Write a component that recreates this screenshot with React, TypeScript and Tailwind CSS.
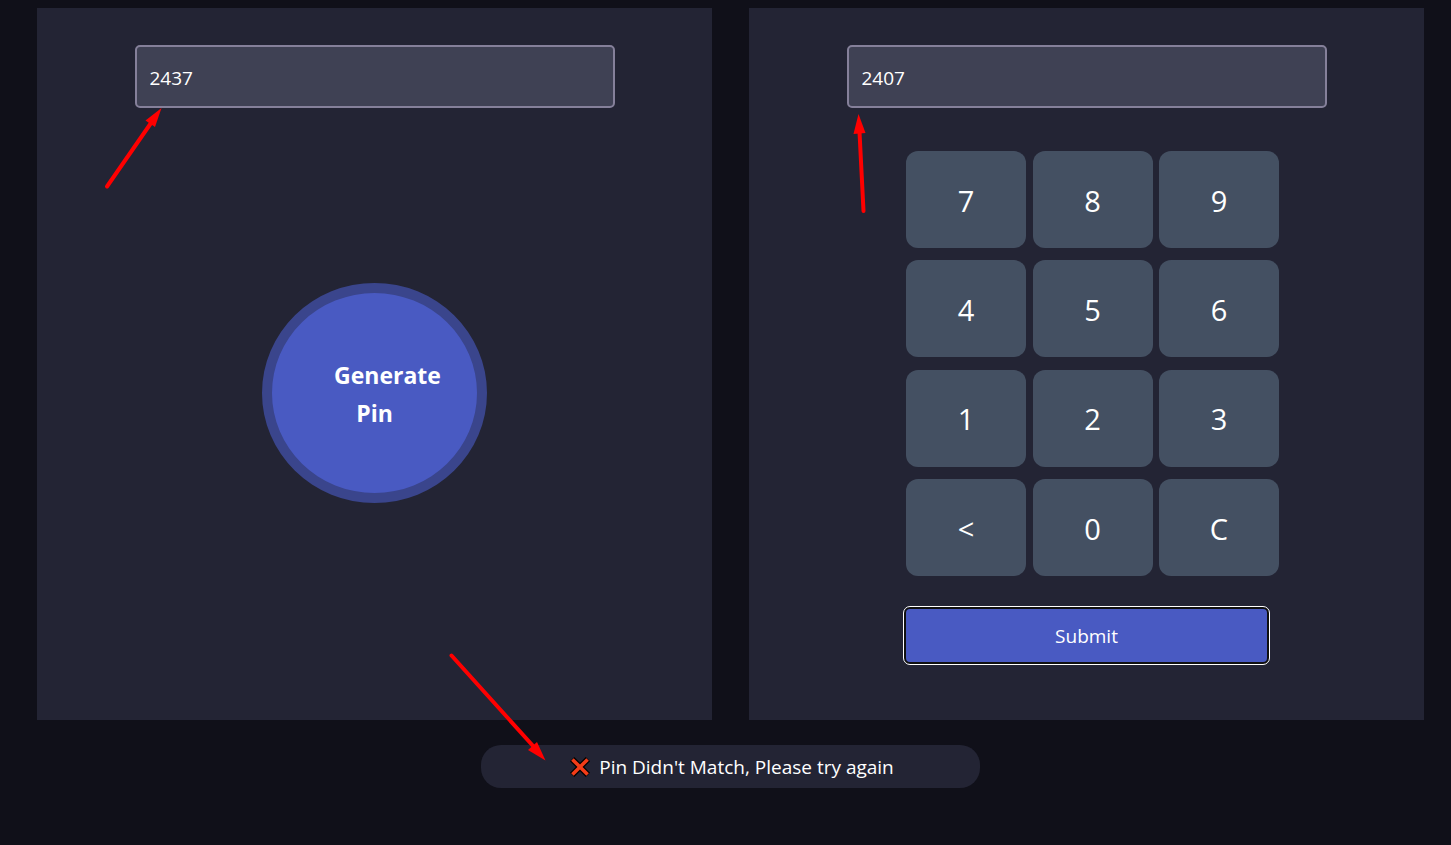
import { useState } from "react";

const KEYS = ["7", "8", "9", "4", "5", "6", "1", "2", "3", "<", "0", "C"];

const FIELD =
  "h-[63px] w-full max-w-[480px] rounded-[5px] border-2 border-[#85809a] bg-[#3f4154] px-[13px] pt-[2px] text-[19px] text-white outline-none";

function CrossMark() {
  return (
    <svg width="22" height="22" viewBox="0 0 22 22" aria-hidden="true" className="shrink-0">
      <path d="M3.1 3.1 18.9 18.9M18.9 3.1 3.1 18.9" stroke="#000" strokeWidth="6" />
      <path d="M3.4 3.4 18.6 18.6M18.6 3.4 3.4 18.6" stroke="#f33c18" strokeWidth="3.6" />
    </svg>
  );
}

export default function App() {
  const [generated, setGenerated] = useState("2437");
  const [entered, setEntered] = useState("2407");
  const [matched, setMatched] = useState(false);

  const press = (key: string) => {
    if (key === "C") setEntered("");
    else if (key === "<") setEntered(entered.slice(0, -1));
    else setEntered(entered + key);
  };

  return (
    <div className="relative min-h-screen bg-[#101019] pt-2 pr-[27px] pl-[37px] font-['Open_Sans','Noto_Sans',sans-serif] text-white">
      <main className="grid grid-cols-2 gap-[37px]">
        <section className="flex flex-col items-center bg-[#232434] pt-[37px]">
          <input
            aria-label="Generated pin"
            className={FIELD}
            value={generated}
            readOnly
          />
          <button
            type="button"
            onClick={() => setGenerated(String(Math.floor(1000 + Math.random() * 9000)))}
            className="mt-[175px] h-[220px] w-[225px] rounded-[50%] border-[10px] border-[#3a458c] bg-[#495ac2] pt-[2px] text-center text-[23px] leading-[38px] font-bold"
          >
            <span className="block pl-[26px]">Generate</span>
            <span className="block">Pin</span>
          </button>
        </section>

        <section className="flex flex-col items-center bg-[#232434] pt-[37px] pb-[58px]">
          <input
            aria-label="Your pin"
            className={FIELD}
            value={entered}
            onChange={(e) => setEntered(e.target.value)}
          />
          <div className="mt-[43px] pl-3">
            <div className="grid h-[425px] w-[373px] grid-cols-[repeat(3,120px)] grid-rows-[repeat(4,97px)] content-between justify-between">
              {KEYS.map((key) => (
                <button
                  key={key}
                  type="button"
                  onClick={() => press(key)}
                  className="rounded-xl bg-[#445062] pt-[2px] text-[29px]"
                >
                  {key}
                </button>
              ))}
            </div>
          </div>
          <button
            type="button"
            onClick={() => setMatched(generated === entered)}
            className="mt-[33px] h-[53px] w-[361px] rounded-[4px] bg-[#495ac2] pt-[2px] text-[19px] ring-2 ring-[#101010] outline-1 outline-offset-2 outline-white"
          >
            Submit
          </button>
        </section>
      </main>

      <p
        role="status"
        className="mx-auto mt-[25px] flex h-[43px] w-full max-w-[499px] items-center justify-center gap-2 rounded-[20px] bg-[#232434] pl-[2px] text-[19px]"
      >
        {!matched && <CrossMark />}
        <span className="pt-[2px]">
          {matched ? "Pin Matched... Secure door is opening for you" : "Pin Didn't Match, Please try again"}
        </span>
      </p>

      <svg
        aria-hidden="true"
        viewBox="0 0 1451 845"
        width="1451"
        height="845"
        className="pointer-events-none absolute top-0 left-0 max-w-full"
        fill="#f00"
        stroke="#f00"
      >
        <path d="M107 186.500 151 123" strokeWidth="4" strokeLinecap="round" />
        <path d="M161.500 108 145.500 120.500 155 127Z" stroke="none" />
        <path d="M863.500 211 859.500 132" strokeWidth="4" strokeLinecap="round" />
        <path d="M858.500 114 853.500 134 865.500 133Z" stroke="none" />
        <path d="M451.500 655.500 534 747" strokeWidth="4" strokeLinecap="round" />
        <path d="M545.500 760.500 528 750 537 742Z" stroke="none" />
      </svg>
    </div>
  );
}
